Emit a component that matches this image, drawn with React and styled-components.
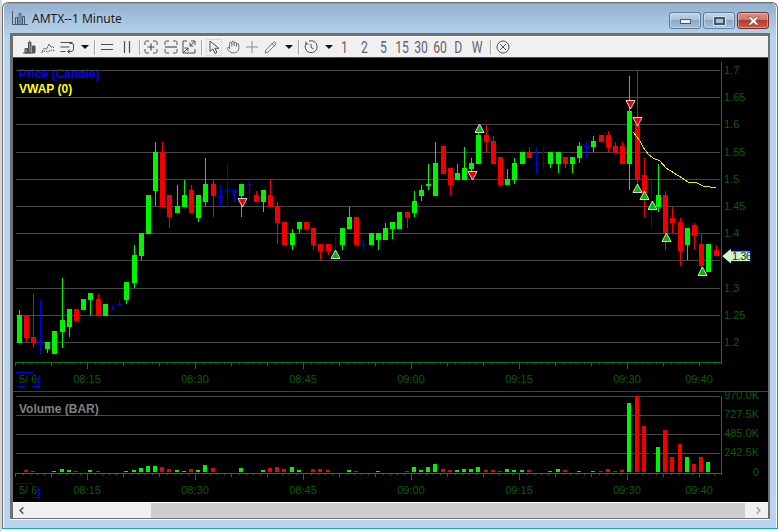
import React from "react";
import styled, { createGlobalStyle } from "styled-components";
import { Hand, Pencil, ChevronLeft, ChevronRight } from "lucide-react";

const GlobalStyle = createGlobalStyle`
  html, body { margin: 0; padding: 0; background: #fff; }
  body { font-family: "Liberation Sans", Arial, sans-serif; }
`;

// candle rows: colour, body top, body bottom, wick top, wick bottom.
// y values are thirds of a pixel below y=110, read off the chart
const G = "#00f400", R = "#f00000", B = "#0000f0";
const candles = [
  [G,616,698,600,698],[R,616,683,616,695],[R,682,698,552,713],[B,697,697,570,731],[G,697,716,697,728],
  [G,664,731,664,731],[G,631,665,504,713],[G,598,650,598,680],[R,598,632,598,632],[G,568,599,568,599],
  [G,550,569,550,615],[R,568,616,552,616],[G,583,617,583,617],[B,598,598,586,598],[B,583,583,570,583],
  [G,517,569,517,581],[G,436,518,405,533],[G,370,437,370,449],[G,256,371,256,371],[G,127,242,97,287],
  [R,127,290,97,290],[R,256,322,256,353],[G,289,308,226,308],[G,256,290,211,290],[R,241,308,226,308],
  [G,256,323,256,335],[G,222,275,144,288],[R,222,257,210,320],[B,257,257,225,291],[B,241,241,162,290],
  [B,241,241,241,275],[G,222,258,222,320],[B,223,223,210,275],[R,255,275,243,275],[G,240,275,240,305],
  [R,255,290,210,290],[R,288,338,276,402],[R,336,404,336,404],[G,369,404,357,419],[G,336,357,336,369],
  [R,336,357,336,357],[R,354,404,354,419],[R,402,423,402,450],[R,402,423,402,435],[B,423,423,372,440],
  [G,354,405,354,420],[G,321,357,291,357],[R,321,404,321,404],[B,403,403,390,423],[G,369,405,369,405],
  [G,369,390,369,420],[G,354,390,339,390],[G,336,357,336,387],[G,306,357,306,357],[R,306,324,306,354],
  [G,273,309,243,321],[G,240,258,225,273],[G,222,228,162,240],[G,159,258,96,258],[R,108,192,108,192],
  [R,174,225,174,255],[G,189,210,162,210],[G,174,210,111,210],[G,159,177,144,190],[G,75,162,60,162],
  [R,75,96,45,126],[R,93,162,78,162],[R,141,225,141,225],[G,207,225,177,225],[G,159,210,144,222],
  [G,126,162,126,162],[R,126,144,111,144],[B,159,159,111,192],[B,159,159,111,177],[G,126,162,126,174],
  [G,126,162,126,189],[R,141,162,141,174],[G,141,162,141,189],[G,108,144,96,159],[B,108,108,96,144],
  [G,93,111,78,126],[R,75,96,75,96],[R,75,111,63,126],[R,108,129,96,129],[R,108,162,96,162],
  [G,3,162,-102,240],[R,45,210,-117,222],[R,195,250,144,321],[B,290,290,210,357],[G,255,291,162,306],
  [R,255,372,243,420],[R,324,339,291,369],[R,336,423,324,468],[G,354,405,354,450],[R,345,378,339,420],
  [R,402,468,372,480],[G,402,486,402,486],[R,420,438,405,438],
];

// volume bars: candle index, height in px
const volumes = {
  1:2,2:1,5:1,6:3,7:2,8:1,10:2,11:1,15:1,16:2,17:4,18:6,19:6,20:5,21:3,22:2,23:1,24:3,25:2,26:7,27:4,31:4,
  34:2,35:4,36:5,37:3,38:5,39:2,41:3,42:3,43:2,46:2,47:1,50:1,54:1,55:5,56:2,57:5,58:8,59:3,60:2,61:2,62:3,
  63:3,64:5,65:2,66:2,67:1,68:3,69:2,70:2,71:2,74:1,75:3,76:2,78:1,80:1,81:1,82:3,83:1,84:2,
  85:69,86:76,87:46,88:19,89:25,90:42,91:15,92:28,93:15,94:8,95:15,96:10,
};

const barX = (i) => Math.floor(19.05 + 7.186 * i);
const toY = (z) => 110 + Math.round(z / 3);

const priceGrid = [70, 97, 124, 152, 179, 206, 233, 260, 288, 315, 342];
// 1.35 sits behind the last-price tag, so it gets no label
const priceLabels = ["1.7", "1.65", "1.6", "1.55", "1.5", "1.45", "1.4", null, "1.3", "1.25", "1.2"];
const volumeGrid = [396, 415, 434, 453];
const volumeLabels = [["970.0K", 399], ["727.5K", 418], ["485.0K", 437], ["242.5K", 456], ["0", 476]];
const times = [["08:15", 87], ["08:30", 195], ["08:45", 303], ["09:00", 411], ["09:15", 519], ["09:30", 627], ["09:40", 699]];

const sells = [[242, 198], [472, 171], [630, 100], [637, 117]];
const buys = [[335, 250], [479, 124], [637, 184], [644, 191], [652, 201], [666, 233], [702, 267]];
const vwap = "633,132 640,141 643,147 648,154 653,158 660,161 666,168 674,173 682,178 688,182 697,183 703,186 710,187 716,187";

const Desktop = styled.div`
  width: 780px;
  height: 531px;
  box-sizing: border-box;
  padding-top: 2px;
  border-left: 2px solid #d6d6d6;
  background: #fff;
  overflow: hidden;
`;

const Window = styled.div`
  width: 776px;
  height: 527px;
  box-sizing: border-box;
  display: flex;
  flex-direction: column;
  padding: 0 7px;
  border: 1px solid #6e6e6e;
  border-bottom: 1px solid #16a6c6;
  border-radius: 6px 6px 0 0;
  background: linear-gradient(#92b1cf, #b8d3ec 34px, #b8d4ee);
  box-shadow: inset 1px 0 0 #f4f8fc, inset -1px 0 0 #f4f8fc, inset 0 1px 0 #9a9a9a;
`;

const TitleBar = styled.div`
  height: 30px;
  flex: none;
  display: flex;
  align-items: center;
  padding: 0 1px 0 2px;
`;

const Title = styled.span`
  margin-left: 4px;
  font-family: "Noto Sans", "Open Sans", sans-serif;
  font-size: 12px;
  color: #1a1a1a;
  text-shadow: 0 0 6px rgba(255, 255, 255, 0.6);
`;

const CaptionGroup = styled.div`
  display: flex;
  gap: 2px;
  margin-left: auto;
  align-self: flex-start;
  margin-top: 9px;
`;

const CaptionButton = styled.div`
  width: 32px;
  height: 17px;
  box-sizing: border-box;
  display: flex;
  align-items: center;
  justify-content: center;
  border: 1px solid ${(p) => (p.$close ? "#6b2e2a" : "#5f7b98")};
  border-radius: 3px;
  background: ${(p) =>
    p.$close
      ? "linear-gradient(#dc8f84, #d0766a 45%, #b5382a 50%, #c4604f)"
      : "linear-gradient(#bfd3e6, #a9c2db 45%, #8ca9c6 50%, #a6c0d9)"};
  box-shadow: inset 0 0 0 1px rgba(255, 255, 255, 0.35);
`;

const MinGlyph = styled.div`
  width: 11px;
  height: 5px;
  box-sizing: border-box;
  margin-top: 2px;
  border: 1px solid #4a5a6c;
  background: #eef2f6;
`;

const MaxGlyph = styled.div`
  width: 11px;
  height: 8px;
  box-sizing: border-box;
  border: 2px solid #44566a;
  outline: 1px solid #dde6ee;
  background: #a9c2db;
`;

const Frame = styled.div`
  flex: none;
  display: flex;
  flex-direction: column;
  border-style: solid;
  border-color: #6f6f6f;
  border-width: 3px 2px 1px 3px;
  box-shadow: 0 1px 0 #fff;
`;

const Toolbar = styled.div`
  height: 22px;
  box-sizing: border-box;
  display: flex;
  align-items: center;
  padding-left: 6px;
  background: #f0f0f0;
  border-top: 1px solid #fff;
  border-bottom: 1px solid #157a15;
  color: #4d4d55;
`;

const Tool = styled.div`
  width: ${(p) => p.$w}px;
  flex: none;
  height: 17px;
  display: flex;
  align-items: center;
  justify-content: center;
`;

const ActiveTool = styled(Tool)`
  box-sizing: border-box;
  border: 1px solid #dcdcdc;
  background: repeating-conic-gradient(#fff 0 25%, #e6e6e6 0 50%) 0 0 / 2px 2px;
`;

const Interval = styled(Tool)`
  font-family: Roboto, "Liberation Sans", sans-serif;
  font-weight: 400;
  font-size: 16px;
  color: #5f5f6a;
  white-space: nowrap;
  & > span {
    display: inline-block;
    transform: scaleX(0.76);
  }
`;

const Caret = styled.div`
  width: 0;
  height: 0;
  border-left: 4px solid transparent;
  border-right: 4px solid transparent;
  border-top: 4px solid #111;
`;

const Separator = styled.div`
  width: 1px;
  height: 15px;
  background: #a6a6a6;
  box-shadow: 1px 0 0 #fff;
`;

const Panel = styled.div`
  position: relative;
  height: ${(p) => p.$h}px;
  background: #000;
  border-bottom: ${(p) => (p.$rule ? "1px solid #0c6a0c" : "none")};
`;

const ChartSvg = styled.svg`
  display: block;
  width: 755px;
  height: 100%;
  font-family: "Liberation Sans", Arial, sans-serif;
  font-size: 11px;
`;

const PriceTag = styled.div`
  position: absolute;
  left: 709px;
  top: 191px;
  width: 30px;
  height: 16px;
`;

const TagText = styled.span`
  position: absolute;
  left: 10px;
  top: 1px;
  font-size: 11px;
  line-height: 13px;
  letter-spacing: -0.5px;
  color: #12380f;
`;

const Scrollbar = styled.div`
  height: 16px;
  box-sizing: border-box;
  display: flex;
  border-top: 1px solid #fff;
  background: #f0f0f0;
`;

const ScrollEnd = styled.div`
  width: ${(p) => p.$w}px;
  flex: none;
  display: flex;
  align-items: center;
  justify-content: ${(p) => (p.$right ? "flex-end" : "flex-start")};
  padding: 0 ${(p) => (p.$right ? "4px" : "0")} 0 ${(p) => (p.$right ? "0" : "3px")};
  box-sizing: border-box;
  color: ${(p) => (p.$right ? "#a6a6a6" : "#555")};
`;

const ScrollThumb = styled.div`
  flex: 1;
  background: #cdcdcd;
`;

const stroke = { fill: "none", stroke: "currentColor", strokeWidth: 1 };

const Icon = ({ children }) => (
  <svg width="14" height="14" viewBox="0 0 14 14" {...stroke}>
    {children}
  </svg>
);

const tools = [
  { w: 20, icon: (
    <Icon>
      <path d="M1 13h12" />
      <path d="M3 8.5h2.5V13H3zM6.5 2.5H9V13H6.5z" fill="#8a8a90" />
      <path d="M10.5 6H13v6.5h-2.5z" fill="#55555d" />
      <path d="M7.7 0.5V3" />
    </Icon>
  ) },
  { w: 18, icon: (
    <Icon>
      <path d="M1 11.5 3.5 8l2 1.5L8 4l2 3 1.5-.5L13 8" strokeDasharray="2 0.6" />
      <path d="M0.5 12.5 4 11l3 1 3-2 3.5.5" strokeDasharray="1.5 1" />
    </Icon>
  ) },
  { w: 20, icon: (
    <Icon>
      <path d="M0.5 2.5h12M0.5 7h9M0.5 11.5h5" />
      <path d="M9.5 3.5h2.5a1.5 1.5 0 0 1 1.5 1.5v4a2.5 2.5 0 0 1-2.5 2.5H8M10 9.5l-2.5 2 2.5 2" />
    </Icon>
  ) },
  { w: 15, caret: true },
  { w: 5, sep: true },
  { w: 20, icon: <Icon><path d="M1 4.5h12M1 9.5h12" strokeWidth="1.2" /></Icon> },
  { w: 19, icon: <Icon><path d="M4.5 1v12M9.5 1v12" strokeWidth="1.2" /></Icon> },
  { w: 6, sep: true },
  { w: 18, icon: (
    <Icon>
      <path d="M5 1H2.5A1.5 1.5 0 0 0 1 2.5V5M9 1h2.5A1.5 1.5 0 0 1 13 2.5V5M5 13H2.5A1.5 1.5 0 0 1 1 11.5V9M9 13h2.5a1.5 1.5 0 0 0 1.5-1.5V9" />
      <path d="M3.5 7h7M7 3.5v7" strokeWidth="1.2" />
    </Icon>
  ) },
  { w: 22, icon: (
    <Icon>
      <path d="M5 1H2.5A1.5 1.5 0 0 0 1 2.5V5M9 1h2.5A1.5 1.5 0 0 1 13 2.5V5M5 13H2.5A1.5 1.5 0 0 1 1 11.5V9M9 13h2.5a1.5 1.5 0 0 0 1.5-1.5V9" />
      <path d="M1 7h12" strokeWidth="1.2" />
    </Icon>
  ) },
  { w: 14, icon: (
    <Icon>
      <path d="M5 1H1v12h12V9M9 1h4v4" />
      <path d="M13 1 8 6M8 2.5V6h3.5M1 13l5-5M2.5 8H6v3.5" />
    </Icon>
  ) },
  { w: 10, sep: true },
  { w: 16, active: true, icon: <Icon><path d="M3 1v10.5l3-2.5 2 4.5 2-1-2-4.2h3.8z" /></Icon> },
  { w: 22, icon: <Hand size={14} strokeWidth={1.3} /> },
  { w: 16, icon: <Icon><path d="M7 1v12M1 7h12" stroke="#8a8a90" /></Icon> },
  { w: 21, icon: <Pencil size={13} strokeWidth={1.4} /> },
  { w: 15, caret: true },
  { w: 5, sep: true },
  { w: 20, icon: (
    <Icon>
      <path d="M5 1.1A6 6 0 1 1 2 3.6" />
      <path d="M1.8 1.5 2 4l2.5-.2M7 4v3.3L9.5 9" />
    </Icon>
  ) },
  { w: 15, caret: true },
  { w: 17, text: "1" },
  { w: 23, text: "2" },
  { w: 14, text: "5" },
  { w: 24, text: "15" },
  { w: 13, text: "30" },
  { w: 25, text: "60" },
  { w: 13, text: "D" },
  { w: 25, text: "W" },
  { w: 1, sep: true },
  { w: 24, icon: <Icon><circle cx="7" cy="7" r="6" /><path d="m4 4 6 6M10 4l-6 6" /></Icon> },
];

function ToolItem({ item }) {
  if (item.sep) return <Tool $w={item.w}><Separator /></Tool>;
  if (item.caret) return <Tool $w={item.w}><Caret /></Tool>;
  if (item.text) return <Interval $w={item.w}><span>{item.text}</span></Interval>;
  if (item.active) return <ActiveTool $w={item.w}>{item.icon}</ActiveTool>;
  return <Tool $w={item.w}>{item.icon}</Tool>;
}

// minute ticks along a time axis, taller every 5 and every 15 minutes
function TimeTicks({ y }) {
  const ticks = [];
  for (let k = 0; k <= 98; k++) {
    const x = Math.floor(15.9 + 7.2 * k) + 0.5;
    const long = (k - 10) % 15 === 0;
    const mid = k % 5 === 0;
    ticks.push(<line key={k} x1={x} x2={x} y1={y} y2={y + (long ? 7 : mid ? 4 : 2)} stroke="#0f780f" />);
  }
  return <g shapeRendering="crispEdges">{ticks}</g>;
}

function TimeLabels({ y }) {
  return (
    <g fill="#0a5c0a">
      <text x="19" y={y}>5/ 6</text>
      {times.map(([t, x]) => (
        <text key={t} x={x} y={y} textAnchor="middle">{t}</text>
      ))}
      <g fill="none" stroke="#0000ee" shapeRendering="crispEdges">
        <path d={`M16 ${y - 10.5}h17`} />
        <path d={`M17 ${y + 3.5}h8`} />
        <path d={`M32 ${y + 3.5}h6v-11`} />
      </g>
    </g>
  );
}

function Candles() {
  return (
    <g shapeRendering="crispEdges">
      {candles.map(([c, t, b, wt, wb], i) => {
        const x = barX(i);
        const top = toY(t);
        return (
          <g key={i} fill={c}>
            <rect x={x} y={toY(wt)} width="1" height={Math.max(1, toY(wb) - toY(wt))} />
            <rect x={x - 2} y={top} width="5" height={Math.max(1, toY(b) - top)} />
          </g>
        );
      })}
    </g>
  );
}

function PriceChart() {
  return (
    <ChartSvg viewBox="13 58 755 333">
      <g fontSize="12" fontWeight="bold">
        <text x="19" y="78" fill="#0000ff">Price (Candle)</text>
        <text x="19" y="92.5" fill="#ffff00">VWAP (0)</text>
      </g>
      <g stroke="#484848" shapeRendering="crispEdges">
        {priceGrid.map((y) => (
          <line key={y} x1="16" x2="720" y1={y + 0.5} y2={y + 0.5} />
        ))}
      </g>
      <Candles />
      <polyline points={vwap} fill="none" stroke="#ecec00" strokeWidth="1" shapeRendering="crispEdges" />
      {sells.map(([x, y]) => (
        <polygon key={x} points={`${x - 4},${y + 0.5} ${x + 5},${y + 0.5} ${x + 0.5},${y + 9}`} fill="#ee0000" stroke="#fff" strokeWidth="0.8" />
      ))}
      {buys.map(([x, y]) => (
        <polygon key={x} points={`${x - 4},${y + 8.5} ${x + 5},${y + 8.5} ${x + 0.5},${y}`} fill="#00b800" stroke="#fff" strokeWidth="0.8" />
      ))}
      <g stroke="#0f780f" shapeRendering="crispEdges">
        <line x1="721.5" x2="721.5" y1="62" y2="363" />
        <line x1="16" x2="722" y1="362.5" y2="362.5" />
      </g>
      <TimeTicks y={362} />
      <g fill="#0a5c0a">
        {priceLabels.map((p, i) => p && (
          <text key={p} x="724" y={priceGrid[i] + 3.5}>{p}</text>
        ))}
      </g>
      <TimeLabels y={383} />
    </ChartSvg>
  );
}

function VolumeChart() {
  return (
    <ChartSvg viewBox="13 392 755 110">
      <g stroke="#484848" shapeRendering="crispEdges">
        {volumeGrid.map((y) => (
          <line key={y} x1="16" x2="720" y1={y + 0.5} y2={y + 0.5} />
        ))}
      </g>
      <text x="19" y="412.5" fontSize="12" fontWeight="bold" fill="#808080">Volume (BAR)</text>
      <g shapeRendering="crispEdges">
        {Object.entries(volumes).map(([i, h]) => {
          const c = candles[i][0];
          return (
            <rect key={i} x={barX(i) - 2} y={472 - h} width="4" height={h} fill={c === B ? "#000" : c} />
          );
        })}
      </g>
      <TimeTicks y={473} />
      <g stroke="#0f780f" shapeRendering="crispEdges">
        <line x1="721.5" x2="721.5" y1="396" y2="474" />
      </g>
      <line x1="16" x2="721" y1="473.5" y2="473.5" stroke="#555" shapeRendering="crispEdges" />
      <g fill="#0a5c0a" textAnchor="end">
        {volumeLabels.map(([t, y]) => (
          <text key={t} x="759" y={y}>{t}</text>
        ))}
      </g>
      <TimeLabels y={494} />
    </ChartSvg>
  );
}

export default function App() {
  return (
    <Desktop>
      <GlobalStyle />
      <Window>
        <TitleBar>
          <svg width="16" height="14" viewBox="0 0 16 14" fill="none" stroke="#4c5662" strokeWidth="1">
            <path d="M0.5 0v13.5H16" />
            <path d="M3.5 13V6.5h2V13M7 13V2.5h2V13M10.5 13V5.5h2V13" />
          </svg>
          <Title>AMTX--1 Minute</Title>
          <CaptionGroup>
            <CaptionButton><MinGlyph /></CaptionButton>
            <CaptionButton><MaxGlyph /></CaptionButton>
            <CaptionButton $close>
              <svg width="13" height="10" viewBox="0 0 13 10">
                <path d="M1 1h3l2.5 2.2L9 1h3L8.5 5 12 9H9L6.5 6.8 4 9H1l3.5-4z" fill="#fff" stroke="#7a3a34" strokeWidth="0.6" />
              </svg>
            </CaptionButton>
          </CaptionGroup>
        </TitleBar>
        <Frame>
          <Toolbar>
            {tools.map((t, i) => (
              <ToolItem key={i} item={t} />
            ))}
          </Toolbar>
          <Panel $h={333} $rule>
            <PriceChart />
            <PriceTag>
              <svg width="30" height="16" viewBox="0 0 30 16">
                <path d="M8 2h20.5v10.5H8z" fill="#ccf8cc" stroke="#0000ee" />
                <path d="M0.8 7.2 8.5 0.6v13.2z" fill="#ccf8cc" stroke="#f2fff2" strokeWidth="0.8" />
              </svg>
              <TagText>1.36</TagText>
            </PriceTag>
          </Panel>
          <Panel $h={110}>
            <VolumeChart />
          </Panel>
          <Scrollbar>
            <ScrollEnd $w={138}><ChevronLeft size={11} strokeWidth={3.5} /></ScrollEnd>
            <ScrollThumb />
            <ScrollEnd $w={23} $right><ChevronRight size={11} strokeWidth={3.5} /></ScrollEnd>
          </Scrollbar>
        </Frame>
      </Window>
    </Desktop>
  );
}
